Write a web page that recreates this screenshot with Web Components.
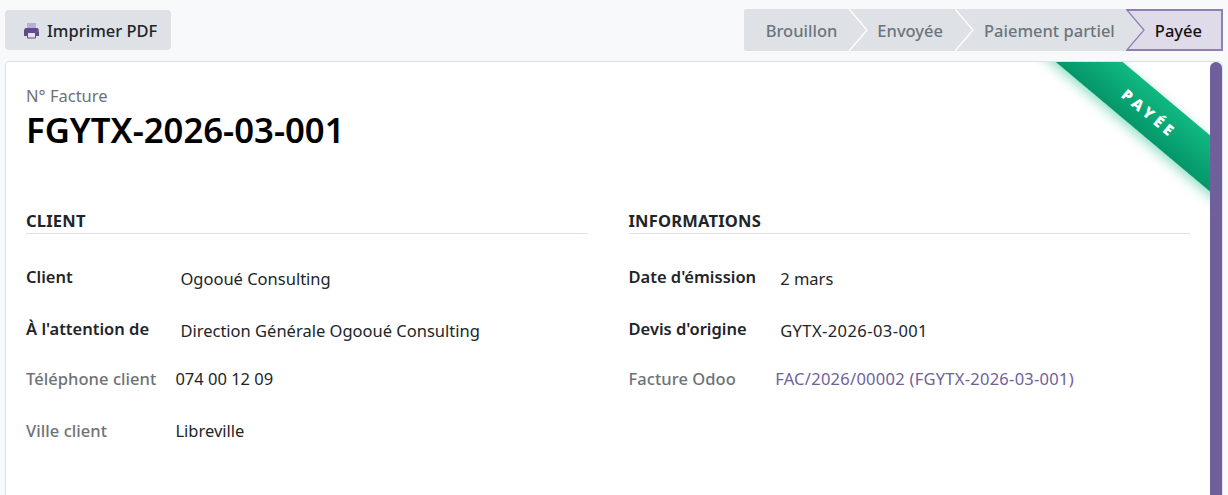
<!DOCTYPE html>
<html lang="fr">
<head>
<meta charset="utf-8">
<title>Facture</title>
<style>
  html, body { height: 100%; }
  body {
    margin: 0;
    height: 495px;
    overflow: hidden;
    background: #f8f9fa;
    color: #212529;
    font: 16.5px "Noto Sans", "Open Sans", sans-serif;
  }
</style>
</head>
<body>
<invoice-page>
  <print-button slot="actions">Imprimer PDF</print-button>
  <status-bar slot="status">
    <status-step>Brouillon</status-step>
    <status-step>Envoyée</status-step>
    <status-step>Paiement partiel</status-step>
    <status-step active>Payée</status-step>
  </status-bar>
  <invoice-sheet slot="sheet" caption="N° Facture" number="FGYTX-2026-03-001" ribbon="PAYÉE">
    <field-group title="CLIENT">
      <field-row label="Client" strong>Ogooué Consulting</field-row>
      <field-row label="À l'attention de" strong>Direction Générale Ogooué Consulting</field-row>
      <field-row label="Téléphone client">074 00 12 09</field-row>
      <field-row label="Ville client">Libreville</field-row>
    </field-group>
    <field-group title="INFORMATIONS">
      <field-row label="Date d'émission" strong>2 mars</field-row>
      <field-row label="Devis d'origine" strong style="--value-spacing: .42px">GYTX-2026-03-001</field-row>
      <field-row label="Facture Odoo" link style="--value-spacing: .26px">FAC/2026/00002 (FGYTX-2026-03-001)</field-row>
    </field-group>
  </invoice-sheet>
</invoice-page>

<script>
class InvoicePage extends HTMLElement {
  constructor() {
    super();
    this.attachShadow({ mode: "open" }).innerHTML = `
      <style>
        :host { display: flex; flex-direction: column; height: 510px; padding: 9px 5px 0; box-sizing: border-box; }
        .top { display: flex; justify-content: space-between; align-items: center; height: 42px; margin-bottom: 10px; flex: none; }
      </style>
      <div class="top">
        <slot name="actions"></slot>
        <slot name="status"></slot>
      </div>
      <slot name="sheet"></slot>
    `;
  }
}

class PrintButton extends HTMLElement {
  constructor() {
    super();
    this.attachShadow({ mode: "open" }).innerHTML = `
      <style>
        :host {
          display: inline-flex; align-items: center; gap: 7px;
          height: 40px; padding: 0 14px 0 18px; box-sizing: border-box;
          background: #dee2e6; border-radius: 4px;
          font-size: 16.5px; font-weight: 500; color: #212529;
        }
        svg { width: 17px; height: 17px; flex: none; }
      </style>
      <svg viewBox="0 0 17 17">
        <path d="M4 1h9v5H4z" fill="#b9aed3"/>
        <path d="M1 9.500Q1 6 3 6h11q2 0 2 3.500V14h-3v-3H4v3H1z" fill="#5f4b8b"/>
        <path d="M4.500 10.500h8V16h-8z" fill="#e4e0ee" stroke="#5f4b8b"/>
        <path d="M14.500 8.500h1.500v1h-1.500z" fill="#e0629a"/>
      </svg>
      <slot></slot>
    `;
  }
}

class StatusBar extends HTMLElement {
  constructor() {
    super();
    this.attachShadow({ mode: "open" }).innerHTML = `
      <style>
        :host { display: flex; height: 42px; }
      </style>
      <slot></slot>
    `;
  }
}

class StatusStep extends HTMLElement {
  constructor() {
    super();
    this.attachShadow({ mode: "open" }).innerHTML = `
      <style>
        :host {
          position: relative; display: flex; align-items: center; box-sizing: border-box;
          height: 42px; padding: 0 11px 0 29px;
          background: #dee2e6; color: #6c757d; font-size: 16.5px; font-weight: 500;
        }
        :host(:first-child) { padding: 0 12px 0 22px; border-radius: 2px 0 0 2px; }
        :host(:nth-child(2)) { padding: 0 12px 0 28px; }
        :host([active]) {
          padding: 0 19px 0 29px; color: #111;
          background: #dfdbe9;
          border: solid #8f80b3; border-width: 2px 2px 2px 0;
        }
        svg { position: absolute; left: 0; top: 0; width: 19px; height: 42px; }
        :host([active]) svg { top: -2px; }
        :host(:first-child) svg { display: none; }
      </style>
      <svg viewBox="0 0 19 42">
        <path d="M0 0L18 21L0 42z" fill="#dee2e6"/>
        <path d="M0 0L18 21L0 42" fill="none" stroke="${this.hasAttribute("active") ? "#8f80b3" : "#fff"}" stroke-width="1.300"/>
      </svg>
      <slot></slot>
    `;
  }
}

class InvoiceSheet extends HTMLElement {
  constructor() {
    super();
    this.attachShadow({ mode: "open" }).innerHTML = `
      <style>
        :host {
          display: flex; flex: 1; min-height: 0; box-sizing: border-box;
          background: #fff; border: 1px solid #dee2e6; border-radius: 4px 4px 0 0;
        }
        .body { position: relative; flex: 1; min-width: 0; overflow: hidden; padding: 23px 20px 0; }
        .thumb { width: 12px; flex: none; background: #6f5f9b; border-radius: 6px 6px 0 0; }
        .caption { font-size: 16.5px; line-height: 21px; color: #6e7276; }
        h1 { margin: 2px 0 58px; font-size: 34.7px; line-height: 44px; font-weight: 600; color: #000; }
        .groups { display: grid; grid-template-columns: 1fr 1fr; column-gap: 41px; }
        .ribbon {
          position: absolute; left: 1144px; top: 51px; width: 300px; height: 43px;
          transform: translate(-50%, -50%) rotate(40deg);
          background: linear-gradient(#10b981, #059669);
          box-shadow: 0 4px 12px rgba(16, 185, 129, .45);
          display: flex; align-items: center; justify-content: center;
          color: #fff; font-size: 15px; font-weight: 900; letter-spacing: 4.3px;
        }
      </style>
      <div class="body">
        <div class="caption">${this.getAttribute("caption")}</div>
        <h1>${this.getAttribute("number")}</h1>
        <div class="groups"><slot></slot></div>
        <div class="ribbon">${this.getAttribute("ribbon")}</div>
      </div>
      <div class="thumb"></div>
    `;
  }
}

class FieldGroup extends HTMLElement {
  constructor() {
    super();
    this.attachShadow({ mode: "open" }).innerHTML = `
      <style>
        :host { display: block; }
        h2 { margin: 0 0 32px; padding-bottom: 1px; font-size: 16.5px; line-height: 22px; font-weight: 700; letter-spacing: .2px; color: #212529; border-bottom: 1px solid #dee2e6; }
        .rows { display: grid; grid-template-columns: max-content 1fr; column-gap: 19px; }
      </style>
      <h2>${this.getAttribute("title")}</h2>
      <div class="rows"><slot></slot></div>
    `;
  }
}

class FieldRow extends HTMLElement {
  constructor() {
    super();
    this.attachShadow({ mode: "open" }).innerHTML = `
      <style>
        :host { display: contents; }
        .label, .value { height: 54px; margin-top: -2px; line-height: 22px; }
        .label { font-weight: 500; color: #6e7276; letter-spacing: .06px; }
        .value { color: #212529; letter-spacing: var(--value-spacing, 0); }
        :host([strong]) .label, :host([strong]) .value { height: 52px; margin-top: 0; }
        :host([strong]) .label { color: #212529; font-weight: 600; letter-spacing: 0; }
        :host([strong]) .value { padding: 2px 0 0 5px; box-sizing: border-box; }
        :host([link]) .value { color: #6f5f9b; }
      </style>
      <div class="label">${this.getAttribute("label")}</div>
      <div class="value"><slot></slot></div>
    `;
  }
}

customElements.define("invoice-page", InvoicePage);
customElements.define("print-button", PrintButton);
customElements.define("status-bar", StatusBar);
customElements.define("status-step", StatusStep);
customElements.define("invoice-sheet", InvoiceSheet);
customElements.define("field-group", FieldGroup);
customElements.define("field-row", FieldRow);
</script>
</body>
</html>
